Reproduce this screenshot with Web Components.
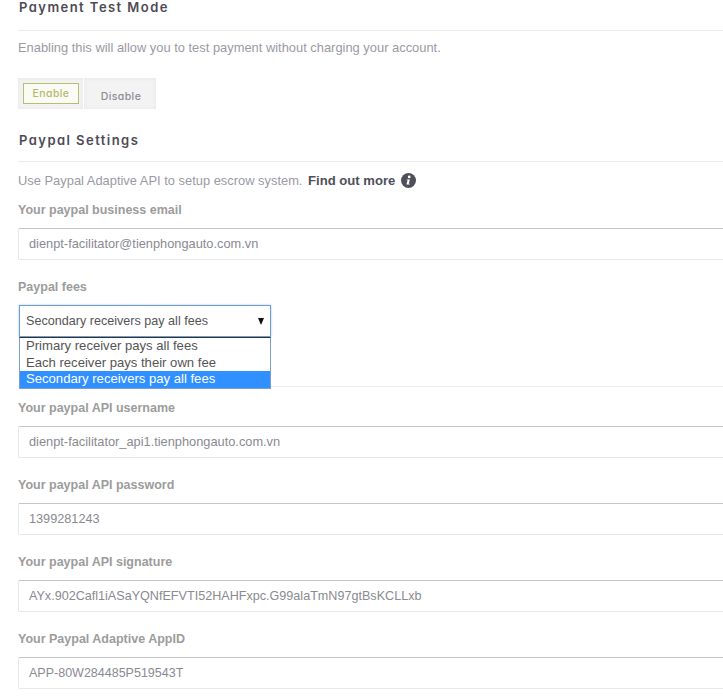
<!DOCTYPE html>
<html><head><meta charset="utf-8"><style>
html,body{margin:0;padding:0;background:#fff;overflow:hidden;height:699px;width:723px}
body{font-family:"Liberation Sans",Arial,sans-serif}
settings-page{display:block}
</style></head><body>
<settings-page>
  <section-head style="--h:30px">Payment Test Mode</section-head>
  <help-text style="--top:9px">Enabling this will allow you to test payment without charging your account.</help-text>
  <toggle-pair></toggle-pair>
  <section-head style="--top:24px;--h:28px">Paypal Settings</section-head>
  <help-text style="--top:11px">Use Paypal Adaptive API to setup escrow system. <b>Find out more</b> <info-icon></info-icon></help-text>
  <form-field style="--top:13px;--fs:12.8px" label="Your paypal business email" value="dienpt-facilitator@tienphongauto.com.vn"></form-field>
  <fee-select style="--top:19px" label="Paypal fees"></fee-select>
  <form-field style="--top:13px;--fs:12.8px" label="Your paypal API username" value="dienpt-facilitator_api1.tienphongauto.com.vn"></form-field>
  <form-field style="--top:19px" label="Your paypal API password" value="1399281243"></form-field>
  <form-field style="--top:19px;--fs:12.6px" label="Your paypal API signature" value="AYx.902Cafl1iASaYQNfEFVTI52HAHFxpc.G99alaTmN97gtBsKCLLxb"></form-field>
  <form-field style="--top:19px;--fs:12.5px" label="Your Paypal Adaptive AppID" value="APP-80W284485P519543T"></form-field>
</settings-page>
<script>
const mk=(name,html)=>customElements.define(name,class extends HTMLElement{
  connectedCallback(){ if(this.shadowRoot)return; const r=this.attachShadow({mode:'open'}); r.innerHTML=html(this); }
});
const display=`font-family:Inter,Lato,sans-serif;font-feature-settings:"cv11" 1;`;
mk('settings-page',()=>`<style>:host{display:block;padding-left:18px;width:723px;box-sizing:border-box;overflow:hidden;height:699px}</style><slot></slot>`);
mk('section-head',()=>`<style>:host{display:block;margin-top:var(--top,0);height:var(--h,30px);border-bottom:1px solid #e9e9ee}
 div{${display}font-weight:600;font-size:13px;line-height:15px;letter-spacing:1.45px;color:#4d4a55;padding-left:1px}</style><div><slot></slot></div>`);
mk('help-text',()=>`<style>:host{display:block;margin-top:var(--top,0);font:12.9px/16px "Liberation Sans",Arial,sans-serif;color:#9a9aa4}
 ::slotted(b){color:#4f4f5c;font-weight:700;font-size:13.1px;margin-left:2px}</style><slot></slot>`);
mk('info-icon',()=>`<style>:host{display:inline-block;vertical-align:-3px;width:15px;height:15px;margin-left:2px}svg{display:block}</style><svg width="15" height="15" viewBox="0 0 15 15"><circle cx="7.5" cy="7.5" r="7.5" fill="#4f4f5c"/><circle cx="8.2" cy="3.9" r="1.4" fill="#fff"/><path d="M5.8 6.4h3.1l-1.2 4.3h1.2l-.3.9H5.4l1.2-4.4H5.6z" fill="#fff"/></svg>`);
mk('toggle-pair',()=>`<style>:host{display:flex;gap:1px;margin-top:22px;width:138px;height:31px}
 .b{background:#f3f3f3;box-shadow:inset 0 0 4px #e6e6e6;${display}font-weight:500;font-size:10.5px;line-height:1;letter-spacing:.4px;display:flex}
 .e{width:65px;align-items:center;justify-content:center}
 .e span{width:56px;height:21px;box-sizing:border-box;border:1px solid #b9bd70;background:#fbfbf6;color:#b5b96a;display:flex;align-items:center;justify-content:center;padding:2px 0 0 1px}
 .d{width:72px;align-items:center;justify-content:center;color:#8d8b95;padding:7px 0 0 2px;box-sizing:border-box}</style><div class="b e"><span>Enable</span></div><div class="b d">Disable</div>`);
const fieldCss=`.l{font:700 12.5px/16px "Liberation Sans",Arial,sans-serif;color:#9c9c9c;height:16px}`;
mk('form-field',el=>`<style>:host{display:block;margin-top:var(--top,0)}${fieldCss}
 .i{margin-top:10px;height:32px;box-sizing:border-box;border:1px solid #e8e8e8;border-top-color:#c4c4c4;border-right:0;border-radius:2px 0 0 2px;padding-left:10px;font:var(--fs,12.7px)/30px "Liberation Sans",Arial,sans-serif;color:#8a8a92;white-space:nowrap;background:#fff}</style><div class="l">${el.getAttribute('label')}</div><div class="i">${el.getAttribute('value')}</div>`);
mk('fee-select',el=>`<style>:host{display:block;margin-top:var(--top,0);height:107px;position:relative;border-bottom:1px solid #e9e9ee}${fieldCss}
 .wrap{position:relative;margin:10px 0 0 1px;width:252px}
 .s{height:32px;box-sizing:border-box;border:1px solid #6d9fd6;box-shadow:0 0 2px #9cc3ea;padding-left:6px;font:12.6px/30px "Liberation Sans",Arial,sans-serif;color:#555;background:#fff;display:flex;justify-content:space-between;align-items:center}
 .a{width:0;height:0;border-left:3.5px solid transparent;border-right:3.5px solid transparent;border-top:7px solid #111;margin-right:6px}
 .m{position:absolute;left:0;top:32px;width:252px;box-sizing:border-box;border:1px solid #7a9fd6;border-top:1px solid #333;background:#fff;font:13.1px/16.5px "Liberation Sans",Arial,sans-serif;color:#555;height:52px}
 .o{padding-left:6px;height:16.5px}.o.on{background:#3090ff;color:#fff}</style><div class="l">${el.getAttribute('label')}</div><div class="wrap"><div class="s"><span>Secondary receivers pay all fees</span><i class="a"></i></div><div class="m"><div class="o">Primary receiver pays all fees</div><div class="o">Each receiver pays their own fee</div><div class="o on">Secondary receivers pay all fees</div></div></div>`);
</script>
</body></html>
